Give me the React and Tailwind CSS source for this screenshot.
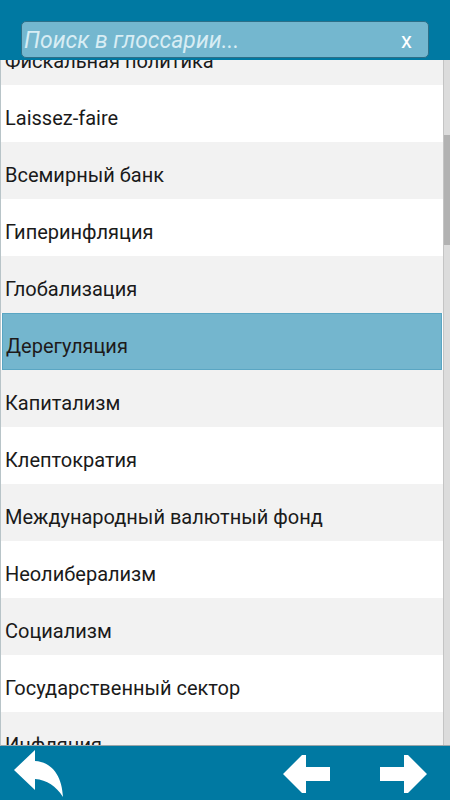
import React from 'react'

const TERMS = [
  'Фискальная политика',
  'Laissez-faire',
  'Всемирный банк',
  'Гиперинфляция',
  'Глобализация',
  'Дерегуляция',
  'Капитализм',
  'Клептократия',
  'Международный валютный фонд',
  'Неолиберализм',
  'Социализм',
  'Государственный сектор',
  'Инфляция',
]

const SELECTED = 'Дерегуляция'

function ReplyIcon() {
  return (
    <svg width="50" height="48" viewBox="0 0 50 48">
      <path d="M0 20 L21 0 L21 11 C38 12 48 26 49 47 C42 36 33 30 21 29 L21 40 Z" fill="#fff" />
    </svg>
  )
}

function ArrowLeft() {
  return (
    <svg width="47" height="38" viewBox="0 0 47 38">
      <path d="M0 19 L19 0 L23 0 L23 12 L47 12 L47 26 L23 26 L23 38 L19 38 Z" fill="#fff" />
    </svg>
  )
}

function ArrowRight() {
  return (
    <svg width="47" height="38" viewBox="0 0 47 38">
      <path d="M47 19 L28 0 L24 0 L24 12 L0 12 L0 26 L24 26 L24 38 L28 38 Z" fill="#fff" />
    </svg>
  )
}

export default function App() {
  return (
    <div className="w-[450px] h-[800px] flex flex-col bg-white overflow-hidden" style={{ fontFamily: 'Roboto, "Noto Sans", sans-serif' }}>
      {/* search header */}
      <div className="h-[60px] shrink-0 bg-[#0079a2] relative z-10 pt-[21px] px-[21px]">
        <div className="h-[37px] w-[408px] rounded-[5px] border border-[#2d6f88] bg-[#74b7cf] flex items-center pl-[2px] pr-[16px] pt-[2px]">
          <span className="flex-1 italic text-[23px] text-[#d8edf4] leading-none">Поиск в глоссарии...</span>
          <span className="text-white text-[22px] leading-none">x</span>
        </div>
      </div>

      {/* list */}
      <div className="flex-1 flex overflow-hidden border-l border-[#b8c4c8] border-b border-b-[#9aa5a9]">
        <div className="flex-1 overflow-hidden">
          <div className="-mt-[32px]">
            {TERMS.map((t, i) => {
              const sel = t === SELECTED
              return (
                <div
                  key={t}
                  className={
                    sel
                      ? 'h-[57px] flex items-center pl-[3px] pt-[8px] mx-[1px] bg-[#74b6ce] border border-[#5aa6c3] text-[20px] text-[#1e1a1a]'
                      : i % 2 === 0
                      ? 'h-[57px] flex items-center pl-[4px] pt-[8px] bg-[#f2f2f2] text-[20px] text-[#1a1a1a]'
                      : 'h-[57px] flex items-center pl-[4px] pt-[8px] bg-white text-[20px] text-[#1a1a1a]'
                  }
                >
                  {t}
                </div>
              )
            })}
          </div>
        </div>
        {/* scrollbar */}
        <div className="w-[7px] shrink-0 bg-[#dcdcdc] border-l border-[#c4c4c4] flex flex-col">
          <div className="h-[75px]" />
          <div className="h-[110px] bg-[#b2b2b2]" />
        </div>
      </div>

      {/* bottom nav */}
      <div className="h-[54px] shrink-0 bg-[#0079a2] flex items-start">
        <div className="ml-[14px] mt-[4px]">
          <ReplyIcon />
        </div>
        <div className="flex-1" />
        <div className="mt-[9px]">
          <ArrowLeft />
        </div>
        <div className="ml-[50px] mr-[23px] mt-[9px]">
          <ArrowRight />
        </div>
      </div>
    </div>
  )
}
